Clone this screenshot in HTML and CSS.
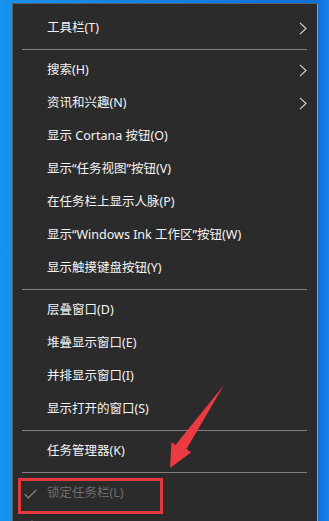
FILE: index.html
```html
<!DOCTYPE html>
<html lang="zh-CN">
<head>
<meta charset="utf-8">
<link rel="stylesheet" href="styles.css">
</head>
<body>
<div class="desk">
  <div class="menu">
    <div class="item"><span class="label">工具栏(T)</span><svg class="chev" viewBox="0 0 8 13"><path d="M1 0.8 L7 6.5 L1 12.2" /></svg></div>
    <div class="sep"></div>
    <div class="item"><span class="label">搜索(H)</span><svg class="chev" viewBox="0 0 8 13"><path d="M1 0.8 L7 6.5 L1 12.2" /></svg></div>
    <div class="item"><span class="label">资讯和兴趣(N)</span><svg class="chev" viewBox="0 0 8 13"><path d="M1 0.8 L7 6.5 L1 12.2" /></svg></div>
    <div class="item"><span class="label">显示 Cortana 按钮(O)</span></div>
    <div class="item"><span class="label">显示“任务视图”按钮(V)</span></div>
    <div class="item"><span class="label">在任务栏上显示人脉(P)</span></div>
    <div class="item"><span class="label">显示“Windows Ink 工作区”按钮(W)</span></div>
    <div class="item"><span class="label">显示触摸键盘按钮(Y)</span></div>
    <div class="sep"></div>
    <div class="item"><span class="label">层叠窗口(D)</span></div>
    <div class="item"><span class="label">堆叠显示窗口(E)</span></div>
    <div class="item"><span class="label">并排显示窗口(I)</span></div>
    <div class="item"><span class="label">显示打开的窗口(S)</span></div>
    <div class="sep"></div>
    <div class="item"><span class="label">任务管理器(K)</span></div>
    <div class="sep"></div>
    <div class="item disabled"><svg class="check" viewBox="0 0 13 10"><path d="M0.7 5.2 L4.3 8.8 L12.3 0.8" /></svg><span class="label">锁定任务栏(L)</span></div>
    <div class="item"><svg class="gear" viewBox="0 0 14 14"><circle cx="7" cy="7" r="4.5" /><circle cx="7" cy="7" r="1.8" /></svg></div>
  </div>
  <div class="highlight"></div>
  <svg class="arrow" viewBox="0 0 329 521"><path d="M224 385 L186.5 449 L191 452.5 L170 468 L171.5 442 L175.5 445 Z" /></svg>
</div>
</body>
</html>
```
FILE: styles.css
```css
html, body {
  margin: 0;
  padding: 0;
}
body {
  width: 329px;
  height: 521px;
  overflow: hidden;
  background: #0f78dc;
}
.desk {
  position: relative;
  width: 329px;
  height: 521px;
  overflow: hidden;
  background: linear-gradient(90deg, #1a93ee 0px, #1790ec 12px, #0d70d8 318px, #1383ea 329px);
  padding-top: 3px;
  box-sizing: border-box;
}
.menu {
  margin-left: 12px;
  width: 306px;
  box-sizing: border-box;
  background: #2b2b2b;
  border: 1px solid #5e5e5e;
  border-right-color: #9c9c9c;
  padding: 8px 0 40px;
  font-family: "Noto Sans", "Noto Sans CJK SC", sans-serif;
  font-size: 12.5px;
  color: #f4f4f4;
}
.item {
  position: relative;
  height: 33px;
  display: flex;
  align-items: center;
  padding-left: 34px;
}
.label {
  white-space: nowrap;
  line-height: 1;
}
.chev {
  position: absolute;
  right: 10px;
  top: 10px;
  width: 8px;
  height: 13px;
  fill: none;
  stroke: #d8d8d8;
  stroke-width: 1.1;
}
.sep {
  height: 1px;
  background: #808080;
  margin: 4px 10px 4px 9px;
}
.disabled {
  color: #6e6e6e;
}
.check {
  position: absolute;
  left: 11px;
  top: 12px;
  width: 13px;
  height: 10px;
  fill: none;
  stroke: #8c8c8c;
  stroke-width: 1.2;
}
.gear {
  position: absolute;
  left: 12px;
  top: 9px;
  width: 14px;
  height: 14px;
  fill: none;
  stroke: #e0e0e0;
  stroke-width: 1.3;
}
.highlight {
  position: absolute;
  left: 18px;
  top: 478px;
  width: 145px;
  height: 36px;
  box-sizing: border-box;
  border: 3px solid #e3383c;
}
.arrow {
  position: absolute;
  left: 0;
  top: 0;
  width: 329px;
  height: 521px;
  fill: #eb3b40;
}
```
